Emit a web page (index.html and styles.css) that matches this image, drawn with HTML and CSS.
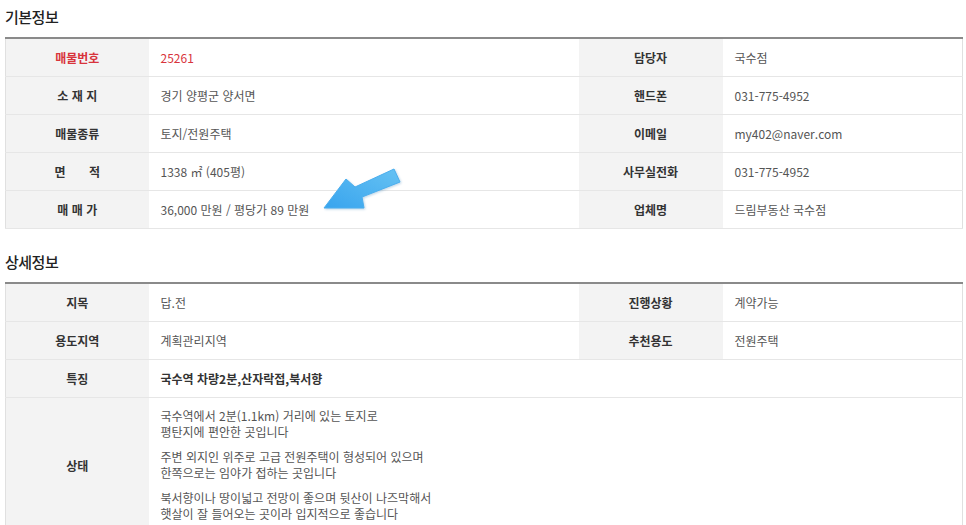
FILE: index.html
```html
<!DOCTYPE html>
<html lang="ko">
<head>
<meta charset="utf-8">
<title>매물정보</title>
<link rel="stylesheet" href="styles.css">
</head>
<body>
<div class="page">
  <section class="sec sec-basic">
    <h2 class="sec-title">기본정보</h2>
    <table class="info">
      <colgroup><col class="c-h1"><col class="c-v1"><col class="c-h2"><col class="c-v2"></colgroup>
      <tr><th class="red">매물번호</th><td class="red">25261</td><th>담당자</th><td>국수점</td></tr>
      <tr><th>소 재 지</th><td>경기 양평군 양서면</td><th>핸드폰</th><td>031-775-4952</td></tr>
      <tr><th>매물종류</th><td>토지/전원주택</td><th>이메일</th><td>my402@naver.com</td></tr>
      <tr><th>면&nbsp;&nbsp;&nbsp;&nbsp;&nbsp;&nbsp;&nbsp;적</th><td>1338 ㎡ (405평)</td><th>사무실전화</th><td>031-775-4952</td></tr>
      <tr><th>매 매 가</th><td>36,000 만원 / 평당가 89 만원</td><th>업체명</th><td>드림부동산 국수점</td></tr>
    </table>
    <svg class="arrow" width="90" height="50" viewBox="320 165 90 50" aria-hidden="true">
      <defs>
        <linearGradient id="ag" x1="0" y1="1" x2="1" y2="0">
          <stop offset="0" stop-color="#38a4ee"/>
          <stop offset="1" stop-color="#66c2f3"/>
        </linearGradient>
      </defs>
      <polygon points="324,208 346,179 355,187 394,169 400,182 362,197 364,208" fill="url(#ag)" stroke="#4aaeee" stroke-width="1" stroke-linejoin="round"/>
    </svg>
  </section>

  <section class="sec sec-detail">
    <h2 class="sec-title">상세정보</h2>
    <table class="info">
      <colgroup><col class="c-h1"><col class="c-v1"><col class="c-h2"><col class="c-v2"></colgroup>
      <tr><th>지목</th><td>답.전</td><th>진행상황</th><td>계약가능</td></tr>
      <tr><th>용도지역</th><td>계획관리지역</td><th>추천용도</th><td>전원주택</td></tr>
      <tr><th>특징</th><td colspan="3" class="strong">국수역 차량2분,산자락접,북서향</td></tr>
      <tr class="tall"><th>상태</th><td colspan="3" class="desc">
        <p>국수역에서 2분(1.1km) 거리에 있는 토지로<br>평탄지에 편안한 곳입니다</p>
        <p>주변 외지인 위주로 고급 전원주택이 형성되어 있으며<br>한쪽으로는 임야가 접하는 곳입니다</p>
        <p>북서향이나 땅이넓고 전망이 좋으며 뒷산이 나즈막해서<br>햇살이 잘 들어오는 곳이라 입지적으로 좋습니다</p>
      </td></tr>
    </table>
  </section>
</div>
</body>
</html>
```

FILE: styles.css
```css
html, body {
  margin: 0;
  padding: 0;
  background: #fff;
}
body {
  font-family: "Noto Sans CJK KR", "Noto Sans", sans-serif;
  color: #555;
  font-size: 12px;
}
.page {
  padding: 0 4px 0 5px;
}
.sec {
  position: relative;
}
.sec-title {
  margin: 0;
  font-size: 15px;
  font-weight: 500;
  color: #222;
  line-height: 20px;
  letter-spacing: -0.5px;
}
.sec-basic .sec-title {
  padding-top: 7px;
  margin-bottom: 10px;
}
.sec-detail .sec-title {
  padding-top: 23px;
  margin-bottom: 10px;
}
.info {
  width: 957px;
  border-collapse: collapse;
  table-layout: fixed;
  border-top: 2px solid #8a8a8a;
  border-left: 1px solid #e0e0e0;
  border-right: 1px solid #e0e0e0;
}
.c-h1 { width: 143px; }
.c-v1 { width: 430px; }
.c-h2 { width: 144px; }
.c-v2 { width: 240px; }
.info th, .info td {
  height: 37px;
  padding: 0;
  border-bottom: 1px solid #e6e6e6;
  vertical-align: middle;
  line-height: 16px;
}
.info th {
  background: #f3f3f3;
  color: #333;
  font-weight: 700;
  text-align: center;
  font-size: 12px;
}
.info td {
  text-align: left;
  padding-left: 12px;
  color: #555;
  font-size: 12px;
}
.info .red {
  color: #d8343c;
}
.info td.strong {
  color: #333;
  font-weight: 700;
}
.info td.desc {
  padding-top: 10px;
  padding-bottom: 2px;
  vertical-align: top;
}
.desc p {
  margin: 0 0 9px 0;
  line-height: 16px;
}
.arrow {
  position: absolute;
  left: 315px;
  top: 165px;
  filter: drop-shadow(1px 1px 1px rgba(0, 90, 160, 0.25));
}
```
